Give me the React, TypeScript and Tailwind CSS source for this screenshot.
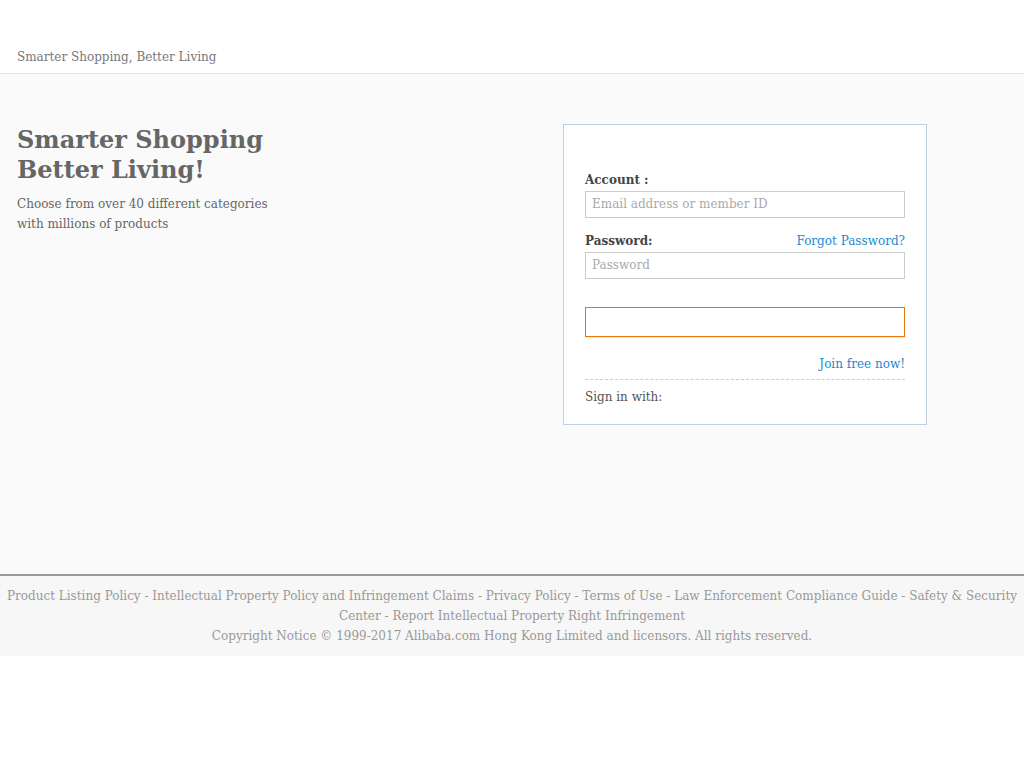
import React from "react";

const serif = { fontFamily: '"DejaVu Serif", serif' } as const;

export default function App() {
  return (
    <div className="w-[1024px] min-h-[768px] bg-white text-[12px] leading-[20px]" style={serif}>
      <header className="h-[74px] border-b border-[#e5e5e5] bg-white px-[17px] pt-[47px]">
        <div className="text-[12px] leading-[20px] text-[#777]">Smarter Shopping, Better Living</div>
      </header>
      <main className="h-[500px] bg-[#fafafa] flex pl-[17px] pt-[50px]">
        <div className="w-[546px]">
          <h1 className="text-[24px] leading-[30px] font-bold text-[#666] mt-[1px]">
            Smarter Shopping
            <br />
            Better Living!
          </h1>
          <p className="mt-[9px] text-[12px] leading-[20px] text-[#666]">
            Choose from over 40 different categories
            <br />
            with millions of products
          </p>
        </div>
        <div className="w-[364px] h-[301px] border border-[#bfd0e4] bg-white px-[21px] pt-[45px]">
          <div className="font-bold text-[#444] leading-[20px]">Account :</div>
          <div className="mt-[1px] h-[27px] w-[320px] border border-[#ccc] px-[6px] leading-[25px] text-[#aaa]">
            Email address or member ID
          </div>
          <div className="mt-[13px] flex justify-between leading-[20px]">
            <span className="font-bold text-[#444]">Password:</span>
            <span className="text-[#1a8ad0]">Forgot Password?</span>
          </div>
          <div className="mt-[1px] h-[27px] w-[320px] border border-[#ccc] px-[6px] leading-[25px] text-[#aaa]">
            Password
          </div>
          <div className="mt-[28px] h-[30px] w-[320px] border border-[#e8780a] bg-white shadow-[0_1px_1px_rgba(0,0,0,0.06)]" />
          <div className="mt-[17px] text-right text-[#1a8ad0] leading-[20px]">Join free now!</div>
          <div className="mt-[5px] border-t border-dashed border-[#ccc]" />
          <div className="mt-[7px] text-[#555] leading-[20px]">Sign in with:</div>
        </div>
      </main>
      <footer className="border-t-2 border-[#999] bg-[#f7f7f7] pt-[10px] pb-[10px] text-center text-[#999] leading-[20px] px-[6px]">
        <div>
          Product Listing Policy - Intellectual Property Policy and Infringement Claims - Privacy Policy - Terms of Use - Law Enforcement Compliance Guide - Safety &amp; Security Center - Report Intellectual Property Right Infringement
        </div>
        <div>Copyright Notice © 1999-2017 Alibaba.com Hong Kong Limited and licensors. All rights reserved.</div>
      </footer>
    </div>
  );
}
